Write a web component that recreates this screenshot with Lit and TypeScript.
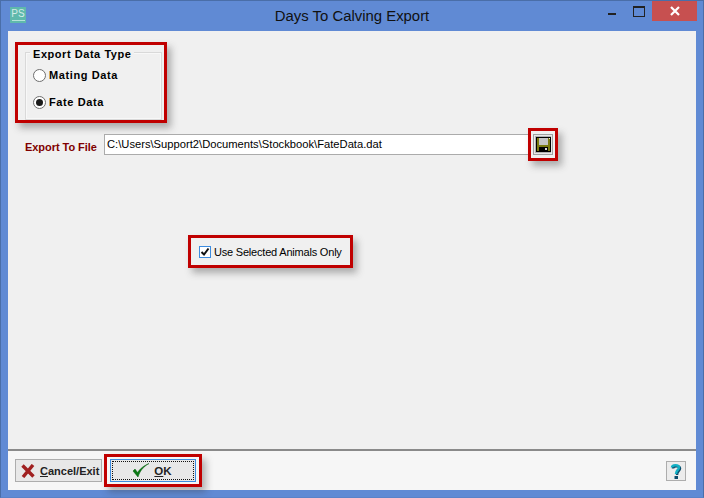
import { LitElement, html, css } from "lit";
import { customElement } from "lit/decorators.js";

@customElement("app-root")
export class AppRoot extends LitElement {
  static styles = css`
    :host { display: block; width: 704px; height: 498px; font-family: "Liberation Sans", Arial, sans-serif; color: #000; font-size: 11px; }
    * { box-sizing: border-box; }
    .window { width: 704px; height: 498px; background: #608ad4; display: flex; flex-direction: column; border: 1px solid #4a6ea8; border-bottom-color: #5a82c8; }
    .titlebar { height: 30px; flex: none; display: grid; grid-template-columns: 1fr auto 1fr; align-items: start; }
    .tb-left { padding: 6px 0 0 9px; }
    .logo { width: 16px; height: 16px; background: #5fb9ac; color: #d4ece7; font-size: 10px; line-height: 11px; padding-top: 1px; text-align: center; display: block; }
    .logo::after { content: ""; display: block; width: 13px; height: 1px; margin: 1px auto 0; background: #b5e2d9; }
    .title { font-size: 14.9px; line-height: 17px; padding-top: 7px; color: #111; white-space: nowrap; }
    .tb-right { display: flex; justify-content: flex-end; padding-right: 6px; }
    .wb { width: 27px; height: 20px; display: flex; align-items: center; justify-content: center; }
    .min::before { content: ""; width: 8px; height: 2px; background: #222; margin-top: 5px; }
    .max::before { content: ""; width: 10px; height: 8px; border: 1px solid #222; border-top-width: 2px; }
    .close { width: 45px; background: #c75050; }
    .body { flex: 1; margin: 0 7px 7px; background: #f0f0f0; display: flex; flex-direction: column; min-height: 0; }
    .main { flex: 1; padding: 11px 0 0 7px; display: flex; flex-direction: column; align-items: flex-start; }
    .mark { border: 3px solid #c00000; box-shadow: 4px 5px 7px rgba(60, 60, 60, 0.38); }
    .group-mark { width: 152px; height: 81px; padding: 7px 2px 0 7px; }
    .group { height: 68px; border: 1px solid #d9d9d9; box-shadow: inset 0 0 0 1px #f8f8f8; position: relative; padding: 15px 0 0 7px; }
    .legend { position: absolute; top: -6px; left: 4px; background: #f0f0f0; padding: 0 3px; font-weight: 700; font-size: 11px; line-height: 14px; letter-spacing: 0.55px; }
    .radio { display: flex; align-items: center; gap: 3px; height: 14px; margin-bottom: 13px; font-weight: 700; letter-spacing: 0.6px; }
    .rb { width: 13px; height: 13px; border-radius: 50%; background: #fff; border: 1px solid #6f6f6f; display: flex; align-items: center; justify-content: center; flex: none; }
    .rb.on::before { content: ""; width: 7px; height: 7px; border-radius: 50%; background: #1a1a1a; }
    .file-row { display: flex; align-items: center; margin-top: 3px; height: 37px; padding-left: 10px; }
    .file-label { width: 79px; color: #800000; font-weight: 700; letter-spacing: -0.05px; margin-top: 4px; }
    .input { width: 425px; height: 21px; background: #fff; border: 1px solid #ababab; border-right: none; font-size: 11.2px; line-height: 19px; padding-left: 2px; white-space: nowrap; }
    .save-mark { width: 30px; height: 33px; display: flex; align-items: center; justify-content: center; margin-left: -1px; }
    .save { width: 20px; height: 21px; background: #ececec; border: 1px solid #a0a0a0; box-shadow: inset 0 0 0 1px #e8e8e8, inset 0 0 0 2px #b4b4b4; display: flex; align-items: center; justify-content: center; }
    .check-mark { margin: 72px 0 0 173px; width: 165px; height: 33px; display: flex; align-items: center; padding-left: 8px; gap: 3px; font-size: 11px; letter-spacing: -0.2px; white-space: nowrap; }
    .cb { width: 12px; height: 12px; background: #fff; border: 1px solid #3c8ce0; display: flex; align-items: center; justify-content: center; flex: none; }
    .footer { flex: none; height: 41px; background: #f6f6f6; border-top: 2px solid #8a8a8a; display: flex; align-items: center; padding: 0 10px 0 7px; }
    .btn { height: 23px; background: #e8e8e8; border: 1px solid #adadad; display: flex; align-items: center; gap: 5px; }
    .cancel { width: 87px; padding-left: 5px; font-weight: 700; font-size: 11px; color: #222; white-space: nowrap; }
    u { text-decoration: underline; }
    .ok-mark { width: 98px; height: 33px; margin-left: 2px; padding: 2px 3px; }
    .ok { width: 100%; height: 100%; background: #e8e8e8; border: 1px solid #3c8ce0; padding: 1px; }
    .ok-inner { height: 100%; border: 1px dotted #111; display: flex; align-items: center; justify-content: center; gap: 4px; font-weight: 700; font-size: 11.5px; color: #222; padding-right: 2px; }
    .spacer { flex: 1; }
    .help { width: 20px; height: 20px; background: #ececec; border: 1px solid #adadad; display: flex; align-items: center; justify-content: center; }
  `;

  render() {
    return html`
      <div class="window">
        <div class="titlebar">
          <div class="tb-left"><span class="logo">PS</span></div>
          <div class="title">Days To Calving Export</div>
          <div class="tb-right">
            <div class="wb min"></div>
            <div class="wb max"></div>
            <div class="wb close">
              <svg width="10" height="10" viewBox="0 0 10 10"><path d="M1 1L9 9M9 1L1 9" stroke="#fff" stroke-width="2.2"/></svg>
            </div>
          </div>
        </div>
        <div class="body">
          <div class="main">
            <div class="mark group-mark">
              <div class="group">
                <div class="legend">Export Data Type</div>
                <div class="radio"><span class="rb"></span>Mating Data</div>
                <div class="radio"><span class="rb on"></span>Fate Data</div>
              </div>
            </div>
            <div class="file-row">
              <div class="file-label">Export To File</div>
              <div class="input">C:\\Users\\Support2\\Documents\\Stockbook\\FateData.dat</div>
              <div class="mark save-mark">
                <div class="save">
                  <svg width="15" height="15" viewBox="0 0 15 15">
                    <rect width="15" height="15" fill="#000"/>
                    <rect x="1" y="1" width="13" height="13" fill="#7a7a10"/>
                    <rect x="3" y="1" width="9" height="7" fill="#c4c4c4"/>
                    <rect x="3" y="10" width="9" height="4" fill="#000"/>
                    <rect x="9" y="11" width="2" height="2" fill="#d8d8d8"/>
                    <rect x="13" y="1" width="1" height="1" fill="#eee"/>
                  </svg>
                </div>
              </div>
            </div>
            <div class="mark check-mark">
              <span class="cb">
                <svg width="10" height="10" viewBox="0 0 10 10"><path d="M1.5 5L4 7.5L8.5 1.5" fill="none" stroke="#111" stroke-width="2"/></svg>
              </span>
              <span>Use Selected Animals Only</span>
            </div>
          </div>
          <div class="footer">
            <div class="btn cancel">
              <svg width="14" height="14" viewBox="0 0 14 14"><path d="M1.500 1.500L12.500 12.500M12 1L2 13" stroke="#a02020" stroke-width="3.4" fill="none"/></svg>
              <span><u>C</u>ancel/Exit</span>
            </div>
            <div class="mark ok-mark">
              <div class="ok"><div class="ok-inner">
                <svg width="18" height="15" viewBox="0 0 18 15"><path d="M1 8L6 14C8 8 11 4 17 0.500C11 3 8 6 5.500 9.500L3 6Z" fill="#0a7a14" stroke="#055a0c" stroke-width=".5"/></svg>
                <span><u>O</u>K</span>
              </div></div>
            </div>
            <div class="spacer"></div>
            <div class="help">
              <svg width="14" height="18" viewBox="0 0 14 18"><path d="M4 6.500C4 3.500 11 3.500 11 6.500C11 9 8 9 8 13" fill="none" stroke="#0b4a6a" stroke-width="2.5"/><path d="M3 5.500C3 2.500 10 2.500 10 5.500C10 8 7 8 7 12" fill="none" stroke="#12b0c4" stroke-width="2.500"/><rect x="5.500" y="14" width="3.500" height="3" fill="#0b4a6a"/></svg>
            </div>
          </div>
        </div>
      </div>
    `;
  }
}
